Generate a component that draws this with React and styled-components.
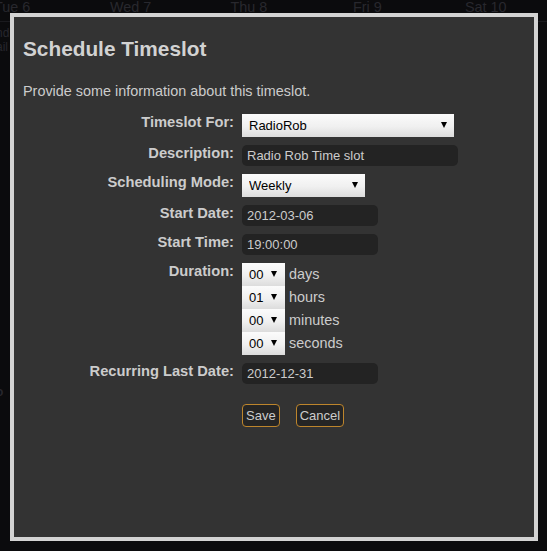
import React from "react";
import styled, { createGlobalStyle } from "styled-components";

const GlobalStyle = createGlobalStyle`
  html, body {
    margin: 0;
    padding: 0;
    background: #0b0b0d;
  }
  body {
    font-family: "Liberation Sans", Arial, sans-serif;
  }
`;

const Page = styled.div`
  position: relative;
  width: 547px;
  height: 551px;
  overflow: hidden;
  background: #0b0b0d;
`;

const CalendarHeader = styled.div`
  display: flex;
  margin-left: -47px;
  margin-top: -1px;
  height: 22px;
  border-bottom: 1px solid #1a1a1e;
`;

const DayHead = styled.div`
  flex: 0 0 118.4px;
  text-align: center;
  font-size: 14.4px;
  line-height: 16.5px;
  color: #28282e;
`;

const SideText = styled.div`
  margin-top: ${(p) => p.$top}px;
  margin-left: -4px;
  font-size: 12px;
  line-height: 14px;
  color: #27272d;
  font-weight: ${(p) => (p.$bold ? "bold" : "normal")};
`;

const Dialog = styled.div`
  position: absolute;
  left: 10px;
  top: 13px;
  width: 528px;
  height: 528px;
  box-sizing: border-box;
  border: 4px solid #d3d3d3;
  background: #333333;
  padding: 20px 9px;
  color: #cccccc;
`;

const Title = styled.h2`
  margin: 0 0 22px;
  font-size: 20.8px;
  font-weight: bold;
  line-height: normal;
  color: #d2d2d2;
`;

const Intro = styled.p`
  margin: 0 0 15px;
  font-size: 14.4px;
  line-height: normal;
  color: #cccccc;
`;

const Form = styled.form`
  display: grid;
  grid-template-columns: 211px auto;
  column-gap: 8px;
  row-gap: 8px;
  align-items: start;
`;

const Label = styled.label`
  text-align: right;
  font-size: 14.7px;
  font-weight: bold;
  line-height: 17px;
  color: #cccccc;
`;

const Field = styled.div`
  justify-self: start;
`;

const SelectWrap = styled.div`
  position: relative;
  width: ${(p) => p.$width}px;
  height: 23px;
`;

const Select = styled.select`
  appearance: none;
  -webkit-appearance: none;
  display: block;
  width: 100%;
  height: 23px;
  margin: 0;
  padding: 0 18px 0 7px;
  border: none;
  border-radius: 0;
  background: linear-gradient(#fbfbfb, #f0f0f0 55%, #dcdcdc);
  color: #000;
  font-family: "Liberation Sans", Arial, sans-serif;
  font-size: 13px;
  outline: none;
`;

const Arrow = styled.span`
  position: absolute;
  right: ${(p) => p.$right}px;
  top: 8px;
  width: 0;
  height: 0;
  border-left: 3px solid transparent;
  border-right: 3px solid transparent;
  border-top: 6px solid #000;
  pointer-events: none;
`;

const Input = styled.input`
  display: block;
  box-sizing: border-box;
  width: ${(p) => p.$width}px;
  height: 21px;
  margin: 0;
  padding: 0 5px;
  border: none;
  border-radius: 5px;
  background: #232323;
  color: #cccccc;
  font-family: "Liberation Sans", Arial, sans-serif;
  font-size: 13px;
  outline: none;
`;

const DurationList = styled.div`
  display: grid;
  grid-template-columns: 43px auto;
  column-gap: 4px;
  align-items: center;
`;

const Unit = styled.span`
  font-size: 14.4px;
  line-height: 23px;
  color: #cccccc;
`;

const Buttons = styled.div`
  grid-column: 2;
  display: flex;
  gap: 16px;
  margin-top: 12px;
`;

const Button = styled.button`
  height: 23px;
  padding: 0 3px;
  border: 1px solid #bd852c;
  border-radius: 4px;
  background: #252525;
  color: #cccccc;
  font-family: "Liberation Sans", Arial, sans-serif;
  font-size: 13px;
  cursor: pointer;
`;

function Dropdown({ width, value, options, arrowRight = 7 }) {
  return (
    <SelectWrap $width={width}>
      <Select defaultValue={value}>
        {options.map((o) => (
          <option key={o} value={o}>
            {o}
          </option>
        ))}
      </Select>
      <Arrow $right={arrowRight} />
    </SelectWrap>
  );
}

const pad = (n) => String(n).padStart(2, "0");
const range = (n) => Array.from({ length: n }, (_, i) => pad(i));

const durations = [
  { unit: "days", value: "00", options: range(31) },
  { unit: "hours", value: "01", options: range(24) },
  { unit: "minutes", value: "00", options: range(60) },
  { unit: "seconds", value: "00", options: range(60) },
];

export default function App() {
  return (
    <Page>
      <GlobalStyle />
      <CalendarHeader>
        {["Tue 6", "Wed 7", "Thu 8", "Fri 9", "Sat 10"].map((d) => (
          <DayHead key={d}>{d}</DayHead>
        ))}
      </CalendarHeader>
      <SideText $top={4}>nd</SideText>
      <SideText $top={0}>ail</SideText>
      <SideText $top={331} $bold>
        o
      </SideText>

      <Dialog>
        <Title>Schedule Timeslot</Title>
        <Intro>Provide some information about this timeslot.</Intro>
        <Form onSubmit={(e) => e.preventDefault()}>
          <Label>Timeslot For:</Label>
          <Field>
            <Dropdown width={212} value="RadioRob" options={["RadioRob"]} />
          </Field>

          <Label>Description:</Label>
          <Field>
            <Input $width={216} defaultValue="Radio Rob Time slot" />
          </Field>

          <Label>Scheduling Mode:</Label>
          <Field>
            <Dropdown
              width={123}
              value="Weekly"
              options={["Once", "Daily", "Weekly", "Monthly"]}
            />
          </Field>

          <Label>Start Date:</Label>
          <Field>
            <Input $width={136} defaultValue="2012-03-06" />
          </Field>

          <Label>Start Time:</Label>
          <Field>
            <Input $width={136} defaultValue="19:00:00" />
          </Field>

          <Label>Duration:</Label>
          <Field>
            <DurationList>
              {durations.map((d) => (
                <React.Fragment key={d.unit}>
                  <Dropdown
                    width={43}
                    value={d.value}
                    options={d.options}
                    arrowRight={8}
                  />
                  <Unit>{d.unit}</Unit>
                </React.Fragment>
              ))}
            </DurationList>
          </Field>

          <Label>Recurring Last Date:</Label>
          <Field>
            <Input $width={136} defaultValue="2012-12-31" />
          </Field>

          <Buttons>
            <Button type="submit">Save</Button>
            <Button type="button">Cancel</Button>
          </Buttons>
        </Form>
      </Dialog>
    </Page>
  );
}
